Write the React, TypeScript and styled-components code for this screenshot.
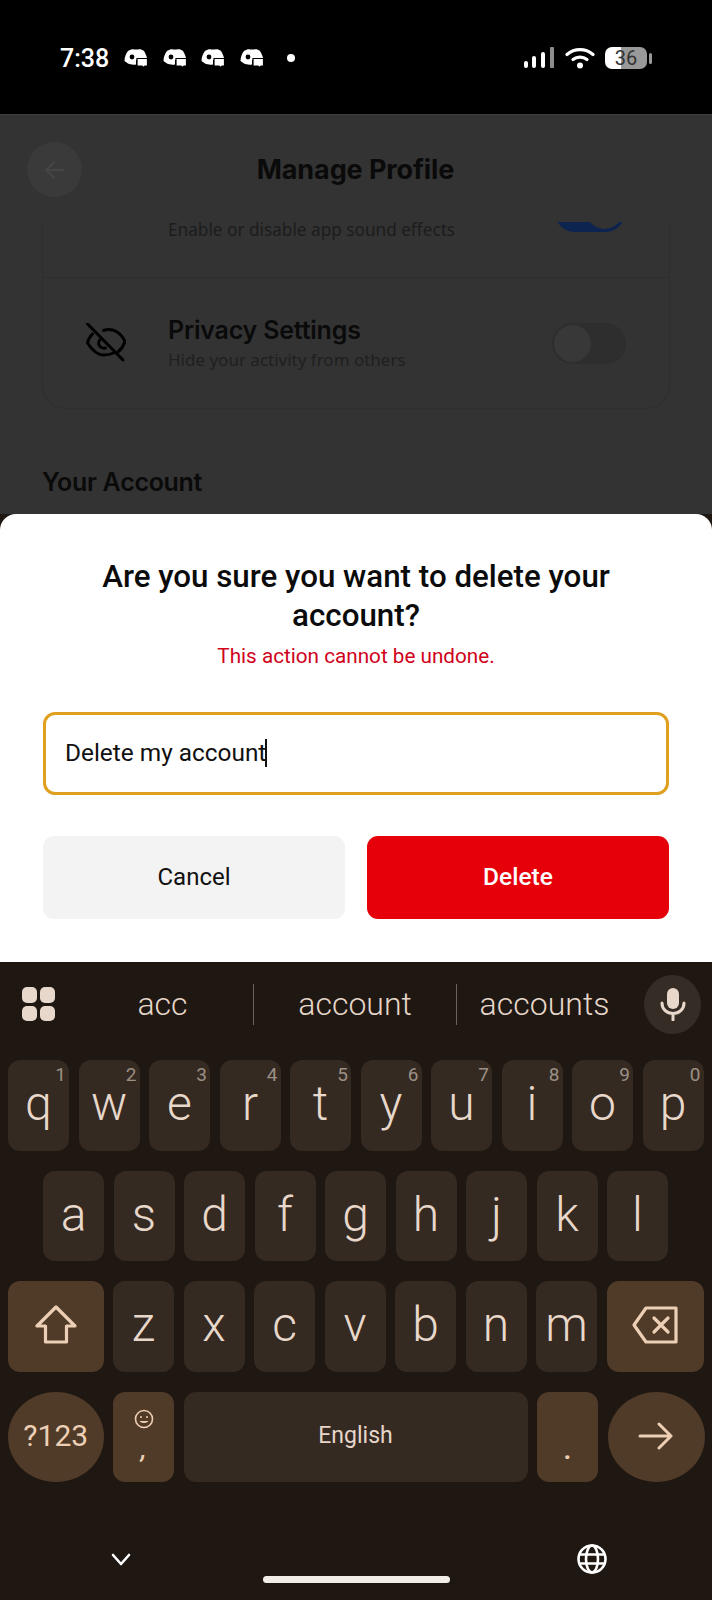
import styled, { createGlobalStyle } from "styled-components";

const GlobalStyle = createGlobalStyle`
  html, body { margin: 0; padding: 0; background: #1f1712; }
  * { box-sizing: border-box; }
`;

const Screen = styled.div`
  width: 712px;
  height: 1600px;
  display: flex;
  flex-direction: column;
  overflow: hidden;
  font-family: Roboto, sans-serif;
`;

/* status bar */
const StatusBar = styled.div`
  height: 114px;
  flex: none;
  background: #000;
  color: #fff;
  display: flex;
  align-items: center;
  justify-content: space-between;
  padding: 2px 60px 0 60px;
`;
const StatusLeft = styled.div`
  display: flex;
  align-items: center;
`;
const Clock = styled.span`
  font-size: 25px;
  font-weight: 500;
  width: 64px;
`;
const NotifIcon = styled.svg`
  width: 24px;
  height: 20px;
  margin-right: 14.5px;
`;
const Dot = styled.span`
  width: 8px;
  height: 8px;
  border-radius: 50%;
  background: #fff;
  margin-left: 9px;
`;
const StatusRight = styled.div`
  display: flex;
  align-items: center;
`;
const Battery = styled.div`
  width: 42px;
  height: 22px;
  border-radius: 7px;
  margin-left: 10px;
  background: linear-gradient(90deg, #fff 0 38%, #999 38% 100%);
  color: #333;
  font-size: 20px;
  font-weight: 400;
  display: flex;
  align-items: center;
  justify-content: center;
`;
const BatteryCap = styled.span`
  width: 3px;
  height: 11px;
  margin-left: 2px;
  border-radius: 2px;
  background: #999;
`;

/* dimmed page behind the sheet */
const Backdrop = styled.div`
  height: 400px;
  flex: none;
  background: #333;
  border-top: 1px solid #3d3d3d;
  display: flex;
  flex-direction: column;
`;
const Header = styled.div`
  height: 107px;
  flex: none;
  padding: 27px 28px 0 27px;
  display: grid;
  grid-template-columns: 55px 1fr 55px;
  align-items: start;
`;
const BackButton = styled.div`
  width: 55px;
  height: 55px;
  border-radius: 50%;
  background: #3a3a3a;
  display: flex;
  align-items: center;
  justify-content: center;
`;
const Title = styled.h1`
  margin: 0;
  height: 55px;
  line-height: 55px;
  text-align: center;
  font-size: 27px;
  font-weight: 700;
  color: #0a0a0a;
  font-family: Inter, sans-serif;
  letter-spacing: -0.1px;
`;
const SettingsCard = styled.div`
  margin: 0 42px;
  height: 187px;
  flex: none;
  border: 1px solid #2f2f2f;
  border-top: 0;
  border-radius: 0 0 24px 24px;
  overflow: hidden;
`;
const ClippedRow = styled.div`
  height: 56px;
  border-bottom: 1px solid #2e2e2e;
  padding: 0 44px 0 125px;
  display: flex;
  justify-content: space-between;
  overflow: hidden;
`;
const FadedText = styled.span`
  font-family: "Noto Sans", sans-serif;
  font-size: 17.2px;
  line-height: 20px;
  color: #1c1c1c;
  margin-top: -2px;
`;
const ToggleArc = styled.div`
  position: relative;
  width: 70px;
  height: 40px;
  margin-top: -30px;
  border-radius: 20px;
  background: #0d2350;
`;
const ToggleArcKnob = styled.span`
  position: absolute;
  right: 2px;
  bottom: 3px;
  width: 37px;
  height: 37px;
  border-radius: 50%;
  background: #333;
`;
const SettingRow = styled.div`
  height: 130px;
  padding: 0 43px 0 43px;
  display: flex;
  align-items: center;
`;
const RowIcon = styled.svg`
  width: 40px;
  height: 40px;
  flex: none;
  margin-right: 42px;
`;
const RowText = styled.div`
  flex: 1;
  display: flex;
  flex-direction: column;
`;
const RowTitle = styled.span`
  font-family: Inter, sans-serif;
  font-size: 25px;
  line-height: 30px;
  font-weight: 600;
  color: #0a0a0a;
  letter-spacing: -0.2px;
`;
const RowSub = styled.span`
  font-family: "Noto Sans", sans-serif;
  font-size: 17px;
  line-height: 24px;
  margin-top: 3px;
  color: #1f1f1f;
`;
const Toggle = styled.div`
  width: 74px;
  height: 41px;
  border-radius: 21px;
  background: #2e2e2e;
  padding: 2px;
`;
const ToggleKnob = styled.div`
  width: 37px;
  height: 37px;
  border-radius: 50%;
  background: #383838;
`;
const SectionLabel = styled.div`
  margin: 58px 0 0 42px;
  font-family: Inter, sans-serif;
  font-size: 25px;
  line-height: 30px;
  font-weight: 600;
  color: #0a0a0a;
  letter-spacing: -0.3px;
`;

/* delete sheet */
const Sheet = styled.div`
  height: 448px;
  flex: none;
  background: #fff;
  border-radius: 16px 16px 0 0;
  padding: 43px 43px 0 43px;
`;
const SheetTitle = styled.h2`
  margin: 0;
  text-align: center;
  font-size: 31.3px;
  line-height: 39px;
  font-weight: 500;
  color: #0b0b0b;
`;
const Warning = styled.p`
  margin: 9px 0 0;
  text-align: center;
  font-size: 20.7px;
  line-height: 24px;
  color: #d0021b;
`;
const InputBox = styled.div`
  margin-top: 44px;
  height: 83px;
  border: 3px solid #e09f1f;
  border-radius: 12px;
  display: flex;
  align-items: center;
  padding: 0 0 2px 19px;
  font-size: 24.4px;
  color: #111;
`;
const Caret = styled.span`
  display: inline-block;
  width: 2px;
  height: 28px;
  margin-left: -1px;
  background: #111;
`;
const ButtonRow = styled.div`
  margin-top: 41px;
  display: grid;
  grid-template-columns: 1fr 1fr;
  gap: 22px;
`;
const SheetButton = styled.div<{ $danger?: boolean }>`
  height: 83px;
  border-radius: 11px;
  display: flex;
  align-items: center;
  justify-content: center;
  padding-bottom: 2px;
  font-size: ${(p) => (p.$danger ? "24.5px" : "24px")};
  font-weight: ${(p) => (p.$danger ? 500 : 400)};
  background: ${(p) => (p.$danger ? "#e6000a" : "#f3f3f3")};
  color: ${(p) => (p.$danger ? "#fff" : "#111")};
`;

/* keyboard */
const Keyboard = styled.div`
  flex: 1;
  background: #1f1712;
  display: flex;
  flex-direction: column;
  color: #e8d8cb;
`;
const SuggestBar = styled.div`
  height: 98px;
  flex: none;
  display: flex;
  align-items: center;
  padding: 0 11px 14px 22px;
`;
const GridIcon = styled.div`
  width: 33px;
  height: 34px;
  flex: none;
  display: grid;
  grid-template-columns: 1fr 1fr;
  gap: 3px;
  margin-right: 17px;
`;
const GridCell = styled.span`
  background: #e8d8cb;
  border-radius: 5px;
`;
const Suggestion = styled.div<{ $width: number; $divider?: boolean }>`
  flex: 0 0 ${(p) => p.$width}px;
  height: 41px;
  display: flex;
  align-items: center;
  justify-content: center;
  font-size: 32px;
  font-weight: 300;
  color: #e6d6c9;
  border-left: ${(p) => (p.$divider ? "1px solid #6d635b" : "none")};
`;
const MicButton = styled.div`
  width: 57px;
  height: 59px;
  flex: none;
  margin-left: 12px;
  border-radius: 50%;
  background: #352c25;
  display: flex;
  align-items: center;
  justify-content: center;
`;
const KeyRows = styled.div`
  display: flex;
  flex-direction: column;
  gap: 20px;
`;
const KeyRow = styled.div<{ $inset?: number }>`
  display: flex;
  gap: 9.5px;
  height: 90.5px;
  padding: 0 7px 0 ${(p) => p.$inset ?? 8}px;
`;
const Key = styled.div<{ $width?: number; $fn?: boolean; $round?: boolean; $grow?: boolean }>`
  position: relative;
  flex: ${(p) => (p.$grow ? "1" : `0 0 ${p.$width ?? 61}px`)};
  display: flex;
  align-items: center;
  justify-content: center;
  border-radius: ${(p) => (p.$round ? "50%" : "12px")};
  background: ${(p) => (p.$fn ? "#503a28" : "#352a21")};
  color: ${(p) => (p.$fn ? "#eccfb4" : "#e8d8cb")};
  font-size: 48px;
  font-weight: 350;
  line-height: 1;
  padding-bottom: 2px;
`;
const Hint = styled.span`
  position: absolute;
  top: 4px;
  right: 3px;
  font-size: 19px;
  font-weight: 400;
  line-height: 22px;
  color: #9c9086;
`;
const SymbolLabel = styled.span`
  font-size: 30px;
  font-weight: 400;
  color: #eccfb4;
`;
const SpaceLabel = styled.span`
  font-size: 23px;
  font-weight: 400;
  color: #e6d6c9;
`;
const StackedKey = styled.div`
  display: flex;
  flex-direction: column;
  align-items: center;
  height: 100%;
  padding-top: 17px;
`;
const CommaGlyph = styled.span`
  font-size: 26px;
  font-weight: 500;
  line-height: 26px;
  font-style: italic;
  margin-top: 7px;
  color: #eccfb4;
`;
const PeriodGlyph = styled.span`
  font-size: 30px;
  font-weight: 500;
  align-self: flex-end;
  margin-bottom: 16px;
  color: #eccfb4;
`;
const NavBar = styled.div`
  flex: 1;
  display: grid;
  grid-template-columns: 263px 187px 1fr;
  padding-top: 62px;
`;
const NavChevron = styled.svg`
  width: 22px;
  height: 16px;
  margin: 8px 0 0 110px;
`;
const HomePill = styled.div`
  width: 187px;
  height: 7px;
  margin-top: 32px;
  border-radius: 4px;
  background: #f3ede8;
`;
const NavGlobe = styled.svg`
  width: 30px;
  height: 30px;
  margin-left: 127px;
`;

function NotificationGlyph() {
  return (
    <NotifIcon viewBox="0 0 24 20">
      <path
        fill="#fff"
        d="M4 3C7 1 9 .8 10 1.5h4C15 .8 18 1 20 3c1.5 2.5 3 6 3.5 9H12v4.500c-3 .5-6 0-8-1L.5 13C.5 9 2 5.500 4 3z"
      />
      <circle cx="8" cy="9" r="2.4" fill="#000" />
      <path fill="#fff" stroke="#000" strokeWidth="1.2" d="M13 10.500h10.500V18H21l-1.500 1.500L18 18h-5z" />
    </NotifIcon>
  );
}

const letterRow1 = [
  ["q", "1"],
  ["w", "2"],
  ["e", "3"],
  ["r", "4"],
  ["t", "5"],
  ["y", "6"],
  ["u", "7"],
  ["i", "8"],
  ["o", "9"],
  ["p", "0"],
];

export default function App() {
  return (
    <Screen>
      <GlobalStyle />
      <StatusBar>
        <StatusLeft>
          <Clock>7:38</Clock>
          <NotificationGlyph />
          <NotificationGlyph />
          <NotificationGlyph />
          <NotificationGlyph />
          <Dot />
        </StatusLeft>
        <StatusRight>
          <svg width="30" height="22" viewBox="0 0 30 22">
            <rect x="0" y="14" width="4" height="7" rx="2" fill="#fff" />
            <rect x="8" y="9" width="4" height="12" rx="2" fill="#fff" />
            <rect x="17" y="5" width="4" height="16" rx="2" fill="#fff" />
            <rect x="26" y="0" width="4" height="21" rx="1" fill="#8c8c8c" />
          </svg>
          <svg width="30" height="22" viewBox="0 0 30 22" style={{ marginLeft: 11 }}>
            <path d="M2 7.5C9.5 1 20.5 1 28 7.5" fill="none" stroke="#fff" strokeWidth="3.2" strokeLinecap="round" />
            <path d="M8 12.5C12 9.2 18 9.2 22 12.5" fill="none" stroke="#fff" strokeWidth="3.2" strokeLinecap="round" />
            <circle cx="15" cy="18.5" r="3" fill="#fff" />
          </svg>
          <Battery>36</Battery>
          <BatteryCap />
        </StatusRight>
      </StatusBar>

      <Backdrop>
        <Header>
          <BackButton>
            <svg width="26" height="26" viewBox="0 0 24 24" fill="none" stroke="#454545" strokeWidth="2" strokeLinecap="round" strokeLinejoin="round">
              <path d="M20 12H4M11 5l-7 7 7 7" />
            </svg>
          </BackButton>
          <Title>Manage Profile</Title>
        </Header>
        <SettingsCard>
          <ClippedRow>
            <FadedText>Enable or disable app sound effects</FadedText>
            <ToggleArc>
              <ToggleArcKnob />
            </ToggleArc>
          </ClippedRow>
          <SettingRow>
            <RowIcon viewBox="0 0 40 40" fill="none" stroke="#000" strokeWidth="3" strokeLinecap="round">
              <path d="M1 .5L37 37" />
              <path d="M17.500 7.500C27 4 35 10 39 18.500C37.500 23 35.500 26 32.500 28.500" />
              <path d="M6.500 11C3.500 14 2 17 1.500 20C6 27 12 32 17.500 32C21 32 24.500 31.500 27.500 30" />
              <path d="M15.500 15.500C12.500 17 11.500 21 14 23.500C15.500 25 17.500 25.500 19.500 25" />
            </RowIcon>
            <RowText>
              <RowTitle>Privacy Settings</RowTitle>
              <RowSub>Hide your activity from others</RowSub>
            </RowText>
            <Toggle>
              <ToggleKnob />
            </Toggle>
          </SettingRow>
        </SettingsCard>
        <SectionLabel>Your Account</SectionLabel>
      </Backdrop>

      <Sheet>
        <SheetTitle>
          Are you sure you want to delete your
          <br />
          account?
        </SheetTitle>
        <Warning>This action cannot be undone.</Warning>
        <InputBox>
          Delete my account
          <Caret />
        </InputBox>
        <ButtonRow>
          <SheetButton>Cancel</SheetButton>
          <SheetButton $danger>Delete</SheetButton>
        </ButtonRow>
      </Sheet>

      <Keyboard>
        <SuggestBar>
          <GridIcon>
            <GridCell />
            <GridCell />
            <GridCell />
            <GridCell />
          </GridIcon>
          <Suggestion $width={181}>acc</Suggestion>
          <Suggestion $width={203} $divider>account</Suggestion>
          <Suggestion $width={176} $divider>accounts</Suggestion>
          <MicButton>
            <svg width="28" height="34" viewBox="0 0 28 34" fill="none">
              <rect x="8" y="1" width="12" height="21" rx="6" fill="#e8d8cb" />
              <path d="M3 16c0 6.5 5 10.5 11 10.5S25 22.5 25 16M14 27v6" stroke="#e8d8cb" strokeWidth="3" strokeLinecap="round" />
            </svg>
          </MicButton>
        </SuggestBar>

        <KeyRows>
          <KeyRow>
            {letterRow1.map(([letter, hint]) => (
              <Key key={letter}>
                {letter}
                <Hint>{hint}</Hint>
              </Key>
            ))}
          </KeyRow>
          <KeyRow $inset={43}>
            {"asdfghjkl".split("").map((letter) => (
              <Key key={letter}>{letter}</Key>
            ))}
          </KeyRow>
          <KeyRow>
            <Key $fn $width={95.5}>
              <svg width="42" height="40" viewBox="0 0 42 40" fill="none" stroke="#eccfb4" strokeWidth="3.2" strokeLinejoin="round">
                <path d="M21 2L2 21h8.500v16h21V21H40z" />
              </svg>
            </Key>
            {"zxcvbnm".split("").map((letter) => (
              <Key key={letter}>{letter}</Key>
            ))}
            <Key $fn $width={97.5}>
              <svg width="46" height="38" viewBox="0 0 46 38" fill="none" stroke="#eccfb4" strokeWidth="3.2" strokeLinejoin="round" strokeLinecap="round">
                <path d="M14 2h30v34H14L2 19z" />
                <path d="M22 12l14 14M36 12L22 26" />
              </svg>
            </Key>
          </KeyRow>
          <KeyRow>
            <Key $fn $round $width={95.5}>
              <SymbolLabel>?123</SymbolLabel>
            </Key>
            <Key $fn>
              <StackedKey>
                <svg width="20" height="20" viewBox="0 0 20 20" fill="none" stroke="#eccfb4" strokeWidth="1.6">
                  <circle cx="10" cy="10" r="8.5" />
                  <circle cx="7" cy="8" r="1" fill="#eccfb4" stroke="none" />
                  <circle cx="13" cy="8" r="1" fill="#eccfb4" stroke="none" />
                  <path d="M5.500 12h9c-1 2.500-8 2.500-9 0z" fill="#eccfb4" stroke="none" />
                </svg>
                <CommaGlyph>,</CommaGlyph>
              </StackedKey>
            </Key>
            <Key $grow>
              <SpaceLabel>English</SpaceLabel>
            </Key>
            <Key $fn>
              <PeriodGlyph>.</PeriodGlyph>
            </Key>
            <Key $fn $round $width={97.5}>
              <svg width="36" height="28" viewBox="0 0 36 28" fill="none" stroke="#eccfb4" strokeWidth="3" strokeLinecap="round" strokeLinejoin="round">
                <path d="M2 14h31M21 2l12 12-12 12" />
              </svg>
            </Key>
          </KeyRow>
        </KeyRows>

        <NavBar>
          <NavChevron viewBox="0 0 22 16" fill="none" stroke="#fff" strokeWidth="2.6" strokeLinecap="round" strokeLinejoin="round">
            <path d="M3 3l8 9 8-9" />
          </NavChevron>
          <HomePill />
          <NavGlobe viewBox="0 0 30 30" fill="none" stroke="#fff" strokeWidth="2.6">
            <circle cx="15" cy="15" r="13.5" />
            <ellipse cx="15" cy="15" rx="6" ry="13.5" />
            <path d="M2 10.500h26M2 19.500h26" />
          </NavGlobe>
        </NavBar>
      </Keyboard>
    </Screen>
  );
}
